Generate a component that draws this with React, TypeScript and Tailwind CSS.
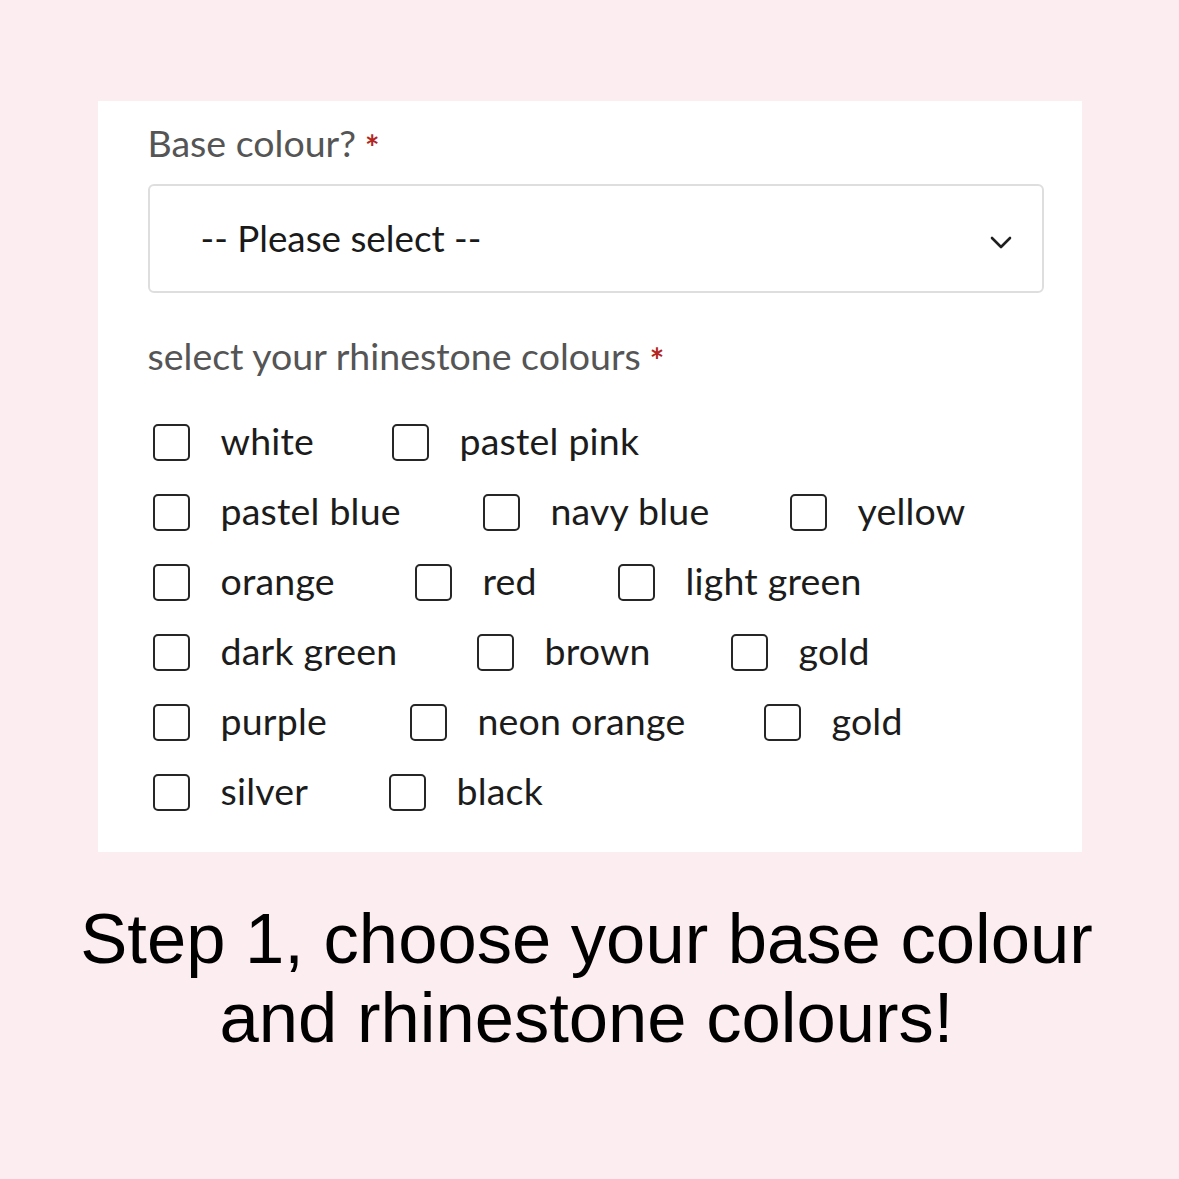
const rows: { label: string; w: number }[][] = [
  [
    { label: 'white', w: 89 },
    { label: 'pastel pink', w: 179 },
  ],
  [
    { label: 'pastel blue', w: 180 },
    { label: 'navy blue', w: 157 },
    { label: 'yellow', w: 105 },
  ],
  [
    { label: 'orange', w: 112 },
    { label: 'red', w: 53 },
    { label: 'light green', w: 174 },
  ],
  [
    { label: 'dark green', w: 174 },
    { label: 'brown', w: 104 },
    { label: 'gold', w: 71 },
  ],
  [
    { label: 'purple', w: 107 },
    { label: 'neon orange', w: 204 },
    { label: 'gold', w: 70 },
  ],
  [
    { label: 'silver', w: 86 },
    { label: 'black', w: 87 },
  ],
];

function Checkbox({ label, w }: { label: string; w: number }) {
  return (
    <label className="flex items-center mr-[82px]">
      <span className="w-[37px] h-[37px] border-[2.5px] border-[#262626] rounded-[5px] bg-white shrink-0" />
      <span
        className="ml-[31px] text-[37.5px] leading-[40px] tracking-[0.2px] text-[#1c1c1c] whitespace-nowrap -mt-[3px]"
        style={{ width: w }}
      >
        {label}
      </span>
    </label>
  );
}

function Required() {
  return (
    <span className="relative top-[7px] ml-[9px] text-[#b3261e] text-[34px] leading-none font-bold align-top">*</span>
  );
}

export default function App() {
  return (
    <div className="w-[1179px] h-[1179px] bg-[#fcedf0] flex flex-col items-center pt-[101px] font-['Lato',sans-serif]">
      <div className="w-[984px] bg-white pl-[50px] pr-[38px] pb-[25px]">
        <div className="pt-[22px] mb-[21px] text-[37.5px] leading-[40px] text-[#555555] whitespace-nowrap">
          Base colour?
          <Required />
        </div>

        <div className="h-[109px] border-2 border-[#dedede] rounded-[6px] flex items-center justify-between pl-[51px] pr-[30px]">
          <span className="text-[36.8px] text-[#1a1a1a]">-- Please select --</span>
          <svg className="mt-[8px]" width="22" height="14" viewBox="0 0 22 14" fill="none">
            <path d="M2 2 L11 11 L20 2" stroke="#1f1f1f" strokeWidth="2.6" strokeLinecap="round" strokeLinejoin="round" />
          </svg>
        </div>

        <div className="mt-[43px] mb-[31px] text-[37.5px] leading-[40px] text-[#555555] whitespace-nowrap">
          select your rhinestone colours
          <Required />
        </div>

        <div className="flex flex-col pl-[5px]">
          {rows.map((row, i) => (
            <div key={i} className="flex h-[70px] items-center">
              {row.map((item, j) => (
                <Checkbox key={j} label={item.label} w={item.w} />
              ))}
            </div>
          ))}
        </div>
      </div>

      <div className="mt-[47px] pr-[6px] text-center text-[70.6px] leading-[79px] text-black font-['Liberation_Sans',Arial,sans-serif]">
        Step 1, choose your base colour
        <br />
        and rhinestone colours!
      </div>
    </div>
  );
}
